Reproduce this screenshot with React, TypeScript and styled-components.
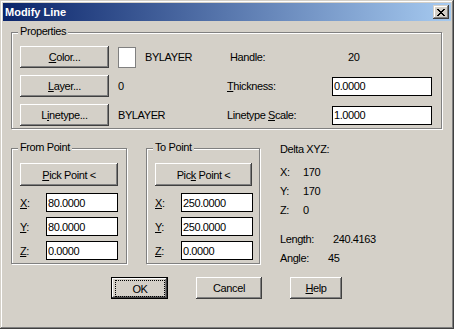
import React from 'react'
import styled, { createGlobalStyle } from 'styled-components'

const GlobalStyle = createGlobalStyle`
  html, body {
    margin: 0;
    padding: 0;
    background: #d4d0c8;
  }
  body {
    font-family: "Liberation Sans", Arial, sans-serif;
    font-size: 11px;
    color: #000;
  }
`

const FACE = '#d4d0c8'
const SHADOW = '#808080'
const DARK = '#404040'

const Window = styled.div`
  box-sizing: border-box;
  width: 454px;
  height: 329px;
  padding: 3px;
  background: ${FACE};
  box-shadow: inset -1px -1px ${DARK}, inset 1px 1px ${FACE}, inset -2px -2px ${SHADOW}, inset 2px 2px #fff;
  display: flex;
  flex-direction: column;
  letter-spacing: -0.4px;
`

const TitleBar = styled.div`
  height: 18px;
  display: flex;
  align-items: center;
  justify-content: space-between;
  padding: 0 2px;
  background: linear-gradient(to right, #0a246a, #a6caf0);
`

const Title = styled.span`
  color: #fff;
  font-weight: bold;
  font-size: 11px;
  letter-spacing: 0;
`

const CaptionButton = styled.div`
  box-sizing: border-box;
  width: 16px;
  height: 14px;
  display: flex;
  align-items: center;
  justify-content: center;
  background: ${FACE};
  box-shadow: inset -1px -1px ${DARK}, inset 1px 1px ${FACE}, inset -2px -2px ${SHADOW}, inset 2px 2px #fff;
`

const Content = styled.div`
  display: flex;
  flex-direction: column;
  padding: 11px 0 0 8px;
`

const GroupBox = styled.div<{ $w: number; $ml?: number }>`
  position: relative;
  box-sizing: border-box;
  width: ${({ $w }) => $w}px;
  margin-left: ${({ $ml }) => $ml ?? 0}px;
  border: 1px solid ${SHADOW};
  box-shadow: inset 1px 1px #fff, 1px 1px #fff;
`

const GroupCaption = styled.span`
  position: absolute;
  top: -8px;
  left: 6px;
  padding: 0 2px;
  line-height: 13px;
  background: ${FACE};
`

const PropGrid = styled.div`
  display: grid;
  grid-template-columns: 98px 109px 105px 100px;
  grid-auto-rows: 22px;
  row-gap: 7px;
  align-items: center;
  padding: 13px 8px 2px 8px;
`

const Button = styled.button<{ $w: number; $h?: number; $default?: boolean }>`
  box-sizing: border-box;
  width: ${({ $w }) => $w}px;
  height: ${({ $h }) => $h ?? 22}px;
  display: flex;
  align-items: stretch;
  justify-content: center;
  padding: 0;
  margin: 0;
  border: ${({ $default }) => ($default ? '1px solid #000' : 'none')};
  background: ${FACE};
  box-shadow: inset -1px -1px ${DARK}, inset 1px 1px #fff, inset -2px -2px ${SHADOW}, inset 2px 2px ${FACE};
  font-family: "Liberation Sans", Arial, sans-serif;
  font-size: 11px;
  letter-spacing: -0.4px;
  color: #000;
  cursor: default;
`

const ButtonLabel = styled.span`
  display: flex;
  align-items: center;
  justify-content: center;
  flex: 1;
  white-space: pre;
`

const FocusRing = styled.span`
  display: flex;
  align-items: center;
  justify-content: center;
  flex: 1;
  margin: 2px 2px 1px 3px;
  border: 1px dotted #000;
`

const ValueCell = styled.div`
  display: flex;
  align-items: center;
  gap: 9px;
`

const Swatch = styled.div<{ $color: string }>`
  box-sizing: border-box;
  width: 18px;
  height: 21px;
  align-self: flex-start;
  background: ${({ $color }) => $color};
  border: 1px solid ${SHADOW};
`

const FieldLabel = styled.span<{ $indent?: number }>`
  padding-left: ${({ $indent }) => $indent ?? 0}px;
`

const TextField = styled.input<{ $w: number }>`
  box-sizing: border-box;
  width: ${({ $w }) => $w}px;
  height: 19px;
  margin: 0;
  padding: 0 1px;
  border: 1px solid #000;
  background: #fff;
  font-family: "Liberation Sans", Arial, sans-serif;
  font-size: 11px;
  letter-spacing: -0.4px;
  color: #000;
  outline: none;
`

const MidRow = styled.div`
  display: flex;
  align-items: flex-start;
  margin-top: 19px;
`

const PointBody = styled.div`
  display: flex;
  flex-direction: column;
  padding: 14px 0 3px 8px;
`

const CoordGrid = styled.div`
  display: grid;
  grid-template-columns: 26px 72px;
  grid-auto-rows: 19px;
  row-gap: 5px;
  align-items: center;
  margin-top: 7px;
`

const DeltaPanel = styled.div`
  display: flex;
  flex-direction: column;
  margin: -8px 0 0 20px;
`

const DeltaBlock = styled.div<{ $gap: number }>`
  display: flex;
  flex-direction: column;
  margin-top: ${({ $gap }) => $gap}px;
`

const DeltaLine = styled.div`
  display: flex;
  height: 19px;
  line-height: 19px;
`

const DeltaLabel = styled.span<{ $w: number }>`
  width: ${({ $w }) => $w}px;
`

const ButtonRow = styled.div`
  display: flex;
  gap: 28px;
  margin-top: 9px;
  padding-left: 100px;
`

const CLOSE_PIXELS = [
  'XX....XX',
  '.XX..XX.',
  '..XXXX..',
  '...XX...',
  '..XXXX..',
  '.XX..XX.',
  'XX....XX',
]

function CloseGlyph() {
  return (
    <svg width="8" height="7" viewBox="0 0 8 7" shapeRendering="crispEdges">
      {CLOSE_PIXELS.map((row, y) =>
        row.split('').map((c, x) => (c === 'X' ? <rect key={`${x}-${y}`} x={x} y={y} width="1" height="1" fill="#000" /> : null))
      )}
    </svg>
  )
}

interface PushButtonProps {
  width: number
  height?: number
  children: React.ReactNode
}

function PushButton({ width, height, children }: PushButtonProps) {
  return (
    <Button $w={width} $h={height}>
      <ButtonLabel>
        <span>{children}</span>
      </ButtonLabel>
    </Button>
  )
}

interface PointGroupProps {
  title: string
  pick: React.ReactNode
  x: string
  y: string
  z: string
  width: number
  buttonWidth: number
  offset?: number
}

function PointGroup({ title, pick, x, y, z, width, buttonWidth, offset }: PointGroupProps) {
  return (
    <GroupBox $w={width} $ml={offset}>
      <GroupCaption>{title}</GroupCaption>
      <PointBody>
        <PushButton width={buttonWidth} height={23}>{pick}</PushButton>
        <CoordGrid>
          <span><u>X</u>:</span>
          <TextField $w={72} readOnly value={x} />
          <span><u>Y</u>:</span>
          <TextField $w={72} readOnly value={y} />
          <span><u>Z</u>:</span>
          <TextField $w={72} readOnly value={z} />
        </CoordGrid>
      </PointBody>
    </GroupBox>
  )
}

export default function App() {
  return (
    <>
      <GlobalStyle />
      <Window>
        <TitleBar>
          <Title>Modify Line</Title>
          <CaptionButton>
            <CloseGlyph />
          </CaptionButton>
        </TitleBar>
        <Content>
          <GroupBox $w={431}>
            <GroupCaption>Properties</GroupCaption>
            <PropGrid>
              <PushButton width={89}><u>C</u>olor...</PushButton>
              <ValueCell>
                <Swatch $color="#fff" />
                <span>BYLAYER</span>
              </ValueCell>
              <FieldLabel $indent={3}>Handle:</FieldLabel>
              <FieldLabel $indent={16}>20</FieldLabel>

              <PushButton width={89}><u>L</u>ayer...</PushButton>
              <ValueCell>0</ValueCell>
              <FieldLabel><u>T</u>hickness:</FieldLabel>
              <TextField $w={100} readOnly value="0.0000" />

              <PushButton width={89}>L<u>i</u>netype...</PushButton>
              <ValueCell>BYLAYER</ValueCell>
              <FieldLabel>Linetype <u>S</u>cale:</FieldLabel>
              <TextField $w={100} readOnly value="1.0000" />
            </PropGrid>
          </GroupBox>

          <MidRow>
            <PointGroup
              title="From Point"
              pick={<><u>P</u>ick Point &lt;</>}
              x="80.0000"
              y="80.0000"
              z="0.0000"
              width={116}
              buttonWidth={98}
            />
            <PointGroup
              title="To Point"
              pick={<>Pic<u>k</u> Point &lt;</>}
              x="250.0000"
              y="250.0000"
              z="0.0000"
              width={114}
              buttonWidth={97}
              offset={19}
            />
            <DeltaPanel>
              <DeltaLine>Delta XYZ:</DeltaLine>
              <DeltaBlock $gap={4}>
                <DeltaLine><DeltaLabel $w={23}>X:</DeltaLabel>170</DeltaLine>
                <DeltaLine><DeltaLabel $w={23}>Y:</DeltaLabel>170</DeltaLine>
                <DeltaLine><DeltaLabel $w={23}>Z:</DeltaLabel>0</DeltaLine>
              </DeltaBlock>
              <DeltaBlock $gap={10}>
                <DeltaLine><DeltaLabel $w={53}>Length:</DeltaLabel>240.4163</DeltaLine>
                <DeltaLine><DeltaLabel $w={48}>Angle:</DeltaLabel>45</DeltaLine>
              </DeltaBlock>
            </DeltaPanel>
          </MidRow>

          <ButtonRow>
            <Button $w={57} $default>
              <FocusRing>OK</FocusRing>
            </Button>
            <PushButton width={66}>Cancel</PushButton>
            <PushButton width={52}><u>H</u>elp</PushButton>
          </ButtonRow>
        </Content>
      </Window>
    </>
  )
}
